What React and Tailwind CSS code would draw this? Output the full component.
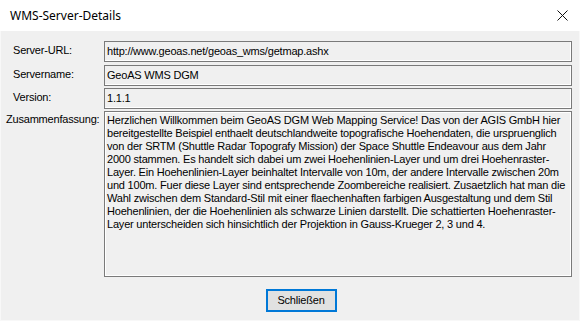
const SUMMARY = [
  'Herzlichen Willkommen beim GeoAS DGM Web Mapping Service! Das von der AGIS GmbH hier',
  'bereitgestellte Beispiel enthaelt deutschlandweite topografische Hoehendaten, die urspruenglich',
  'von der SRTM (Shuttle Radar Topografy Mission) der Space Shuttle Endeavour aus dem Jahr',
  '2000 stammen. Es handelt sich dabei um zwei Hoehenlinien-Layer und um drei Hoehenraster-',
  'Layer. Ein Hoehenlinien-Layer beinhaltet Intervalle von 10m, der andere Intervalle zwischen 20m',
  'und 100m. Fuer diese Layer sind entsprechende Zoombereiche realisiert. Zusaetzlich hat man die',
  'Wahl zwischen dem Standard-Stil mit einer flaechenhaften farbigen Ausgestaltung und dem Stil',
  'Hoehenlinien, der die Hoehenlinien als schwarze Linien darstellt. Die schattierten Hoehenraster-',
  'Layer unterscheiden sich hinsichtlich der Projektion in Gauss-Krueger 2, 3 und 4.',
]

const FIELDS = [
  { label: 'Server-URL:', value: 'http://www.geoas.net/geoas_wms/getmap.ashx', mt: 'mt-[10px]' },
  { label: 'Servername:', value: 'GeoAS WMS DGM', mt: 'mt-[3px]' },
  { label: 'Version:', value: '1.1.1', mt: 'mt-[2px]' },
]

function Field({ label, value, mt }) {
  return (
    <div className={`flex ${mt}`}>
      <div className="w-[103px] shrink-0 pl-[12px] pt-[3px] leading-[13px]">{label}</div>
      <div className="w-[468px] h-[21px] border border-[#7a7a7a] shadow-[inset_-1px_-1px_0_#ffffff] px-[2px] pt-[3px] leading-[13px] whitespace-nowrap">
        {value}
      </div>
    </div>
  )
}

export default function App() {
  return (
    <div className="w-[581px] h-[321px] flex flex-col bg-white text-black font-['Liberation_Sans',Arial,sans-serif] text-[11px] tracking-[-0.2px]">
      <div className="h-[31px] flex items-center justify-between pl-[10px] pr-[12px] bg-white tracking-normal">
        <span className="font-['Noto_Sans',sans-serif] text-[12px] text-black">WMS-Server-Details</span>
        <svg width="11" height="11" viewBox="0 0 11 11" className="mr-[1px]">
          <path d="M0.5 0.5 L10.5 10.5 M10.5 0.5 L0.5 10.5" stroke="#111" strokeWidth="1" fill="none" />
        </svg>
      </div>
      <div className="flex-1 flex flex-col bg-[#f0f0f0] border-r border-b border-l border-[#f8f8f8] mr-[1px]">
        {FIELDS.map((f) => (
          <Field key={f.label} {...f} />
        ))}
        <div className="flex mt-[2px]">
          <div className="w-[103px] shrink-0 pl-[5px] pt-[2px] leading-[13px] whitespace-nowrap">Zusammenfassung:</div>
          <div className="w-[468px] h-[166px] border border-[#7a7a7a] shadow-[inset_1px_1px_0_#ffffff,inset_-1px_-1px_0_#ffffff] pl-[2px] pt-[2px] leading-[13px]">
            {SUMMARY.map((line, i) => (
              <div key={i} className="whitespace-nowrap">{line}</div>
            ))}
          </div>
        </div>
        <div className="flex justify-center mt-[12px] pl-[22px]">
          <button className="w-[71px] h-[23px] border-2 border-[#0078d7] bg-[#e1e1e1] text-[11px] leading-[13px] text-black">
            Schließen
          </button>
        </div>
      </div>
    </div>
  )
}
